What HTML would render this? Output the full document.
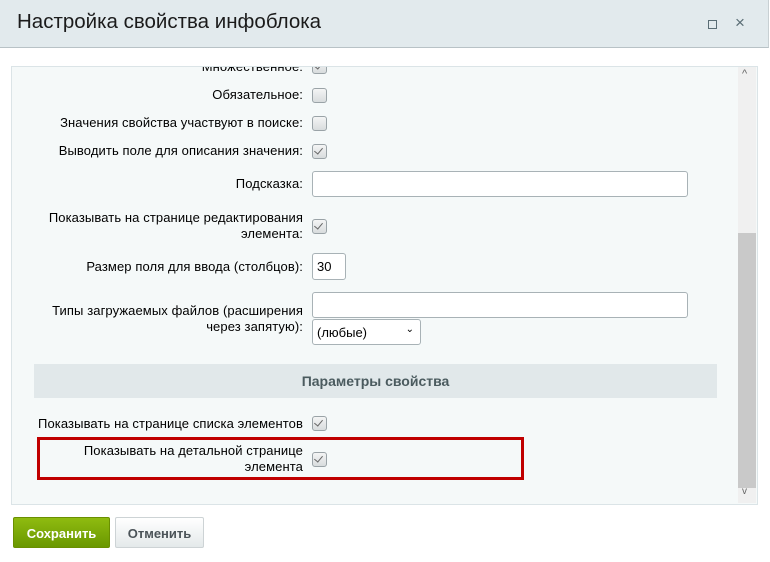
<!DOCTYPE html>
<html><head><meta charset="utf-8"><style>
body{margin:0;width:770px;height:562px;background:#fff;font-family:"Liberation Sans",sans-serif;font-size:13px;color:#000;position:relative;overflow:hidden}
.hdr{position:absolute;left:0;top:0;width:768px;height:47px;background:#e2eaed;border-bottom:1px solid #b8c2c6;border-right:1px solid #c8d0d3}
.hdr .t{position:absolute;left:17px;top:10px;font-size:20.5px;color:#1b1b1b}
.panel{position:absolute;left:11px;top:66px;width:745px;height:437px;background:#f5f9f9;border:1px solid #dbe4e7;overflow:hidden}
.sb{position:absolute;left:738px;top:67px;width:18px;height:436px;background:#f0f0f0}
.thumb{position:absolute;left:738px;top:233px;width:18px;height:255px;background:#c9c9c9}
.lab{position:absolute;right:467px;text-align:right;line-height:16px;white-space:nowrap;letter-spacing:0.1px}
.cb{position:absolute;left:312px;width:13px;height:13px;border:1px solid #9aa3a7;border-radius:3px;background:linear-gradient(#f4f5f5,#d8dcdd)}
.cb.c::after{content:"";position:absolute;left:3px;top:1px;width:4px;height:7px;border:solid #666;border-width:0 1.5px 1.5px 0;transform:rotate(40deg)}
.inp{position:absolute;background:#fff;border:1px solid #a8b2b6;border-radius:3px;box-sizing:border-box}
.sec{position:absolute;left:34px;top:364px;width:683px;height:34px;background:#e1e8ea;text-align:center;line-height:34px;font-weight:bold;font-size:14px;color:#4b5b5f}
.red{position:absolute;left:37px;top:437px;width:481px;height:37px;border:3px solid #c00000}
.btn{position:absolute;top:517px;height:31px;line-height:31px;text-align:center;font-weight:bold;border-radius:2px}
</style></head><body>
<div class="hdr"><div class="t">Настройка свойства инфоблока</div>
<div style="position:absolute;left:708px;top:20px;width:7px;height:7px;border:1px solid #5a6d75"></div>
<div style="position:absolute;left:735px;top:13px;font-size:17px;color:#5a6d75">×</div></div>
<div class="panel"></div>
<div class="sb"></div><div class="thumb"></div>
<div style="position:absolute;left:742px;top:68px;font-size:11px;color:#666">&#94;</div>
<div style="position:absolute;left:742px;top:486px;font-size:10px;color:#666">v</div>
<div class="lab" style="top:59px;clip-path:inset(8px 0 0 0)">Множественное:</div><div class="cb c" style="top:59px;clip-path:inset(8px 0 0 0)"></div>
<div class="lab" style="top:87px">Обязательное:</div><div class="cb" style="top:88px"></div>
<div class="lab" style="top:115px">Значения свойства участвуют в поиске:</div><div class="cb" style="top:116px"></div>
<div class="lab" style="top:143px">Выводить поле для описания значения:</div><div class="cb c" style="top:144px"></div>
<div class="lab" style="top:176px">Подсказка:</div><div class="inp" style="left:312px;top:171px;width:376px;height:26px"></div>
<div class="lab" style="top:210px">Показывать на странице редактирования<br>элемента:</div><div class="cb c" style="top:219px"></div>
<div class="lab" style="top:259px">Размер поля для ввода (столбцов):</div><div class="inp" style="left:312px;top:253px;width:34px;height:27px;padding:5px 0 0 4px">30</div>
<div class="lab" style="top:303px">Типы загружаемых файлов (расширения<br>через запятую):</div>
<div class="inp" style="left:312px;top:292px;width:376px;height:26px"></div>
<div class="inp" style="left:312px;top:319px;width:109px;height:26px;padding:5px 0 0 4px">(любые)<span style="position:absolute;right:6px;top:4px;font-size:10px">&#8964;</span></div>
<div class="sec">Параметры свойства</div>
<div class="lab" style="top:416px">Показывать на странице списка элементов</div><div class="cb c" style="top:416px"></div>
<div class="red"></div>
<div class="lab" style="top:443px">Показывать на детальной странице<br>элемента</div><div class="cb c" style="top:452px"></div>
<div class="btn" style="left:13px;width:97px;background:linear-gradient(#8fbb10,#6a9800);color:#fff;border:1px solid #6a8f00;box-sizing:border-box">Сохранить</div>
<div class="btn" style="left:115px;width:89px;background:linear-gradient(#fff,#e4e9ea);color:#4b5358;border:1px solid #cdd3d5;box-sizing:border-box">Отменить</div>
</body></html>
